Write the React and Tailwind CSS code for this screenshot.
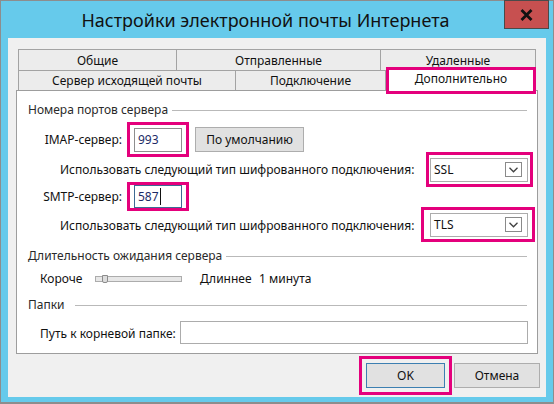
import React from 'react';

const font = { fontFamily: '"Noto Sans", "Liberation Sans", sans-serif' };

function Chevron() {
  return (
    <svg width="9" height="6" viewBox="0 0 9 6" className="block">
      <path d="M0.5 0.8 L4.5 4.8 L8.5 0.8" fill="none" stroke="#404040" strokeWidth="1.3" />
    </svg>
  );
}

function Select({ value }) {
  return (
    <div className="flex h-[24px] w-[98px] items-center border border-[#acacac] bg-white pl-[3px] pr-[5px] text-[12px] text-[#111]">
      <span className="flex-1">{value}</span>
      <span className="flex h-[15px] w-[17px] items-center justify-center border border-[#8a8a8a] bg-white">
        <Chevron />
      </span>
    </div>
  );
}

function GroupHeader({ label, gap = 'ml-[4px]' }) {
  return (
    <div className="flex h-[16px] items-center pl-[11px] pr-[10px]">
      <span className="text-[12px] leading-none text-[#2a2a2a]">{label}</span>
      <span className={`h-px flex-1 bg-[#b9b9b9] ${gap}`} />
    </div>
  );
}

export default function App() {
  return (
    <div
      className="flex h-[404px] w-[554px] flex-col border border-b-2 border-[#8d8d8d] bg-[#66caeb]"
      style={font}
    >
      {/* title bar */}
      <div className="flex h-[37px] items-start">
        <div className="flex h-[37px] flex-1 items-center justify-center pl-[26px] pt-[2px] text-[18px] text-[#111]">
          Настройки электронной почты Интернета
        </div>
        <div className="mr-[4px] mt-[-1px] flex h-[29px] w-[45px] items-center justify-center border border-[#4a4a4a] bg-[#c75050]">
          <svg width="13" height="12" viewBox="0 0 13 12">
            <path d="M1.5 1 L11.5 11 M11.5 1 L1.5 11" stroke="#111" strokeWidth="2.8" />
          </svg>
        </div>
      </div>

      {/* client area */}
      <div className="mx-[7px] flex h-[359px] flex-col bg-[#f0f0f0] text-[12px] text-[#111]">
        {/* tabs */}
        <div className="mt-[11px] ml-[8px] w-[522px]">
          <div className="flex h-[21px] px-[2px]">
            <div className="flex w-[159px] items-center justify-center border border-b-0 border-[#a3a3a3] bg-[#ececec] pt-px">Общие</div>
            <div className="flex w-[204px] items-center justify-center border border-b-0 border-l-0 border-[#a3a3a3] bg-[#ececec] pt-px">Отправленные</div>
            <div className="flex w-[155px] items-center justify-center border border-b-0 border-l-0 border-[#a3a3a3] bg-[#ececec] pt-px">Удаленные</div>
          </div>
          <div className="flex h-[20px] px-[2px]">
            <div className="flex w-[218px] items-center justify-center border border-b-0 border-[#a3a3a3] bg-[#ececec] pt-px">Сервер исходящей почты</div>
            <div className="flex w-[150px] items-center justify-center border border-b-0 border-l-0 border-[#a3a3a3] bg-[#ececec] pt-px">Подключение</div>
            <div className="relative z-10 -mt-[3px] flex h-[27px] w-[150px] items-center justify-center self-start border-[3px] border-[#e4007c] bg-white pb-[3px]">
              Дополнительно
            </div>
          </div>

          {/* panel */}
          <div className="flex h-[264px] flex-col border border-[#9d9d9d] bg-white">
            <div className="mt-[11px]">
              <GroupHeader label="Номера портов сервера" />
            </div>

            <div className="mt-[4px] flex h-[35px] items-center pl-[11px]">
              <span className="w-[94px] text-right">IMAP-сервер:</span>
              <div className="ml-[5px] flex h-[35px] w-[62px] items-center justify-center border-[3px] border-[#e4007c]">
                <div className="flex h-[24px] w-[48px] items-center border border-[#8e8e8e] bg-white pl-[3px] text-[#1c2a66]">993</div>
              </div>
              <div className="ml-[6px] flex h-[25px] w-[109px] items-center justify-center border border-[#adadad] bg-[#e1e1e1]">
                По умолчанию
              </div>
            </div>

            <div className="-mt-[5px] flex h-[35px] items-center pl-[43px] pr-[4px]">
              <span>Использовать следующий тип шифрованного подключения:</span>
              <div className="ml-auto flex h-[35px] w-[107px] items-center border-[3px] border-[#e4007c] pl-[1px]">
                <Select value="SSL" />
              </div>
            </div>

            <div className="-mt-[5px] flex h-[29px] items-center pl-[11px]">
              <span className="w-[94px] text-right">SMTP-сервер:</span>
              <div className="ml-[5px] flex h-[29px] w-[62px] items-center justify-center border-[3px] border-[#e4007c]">
                <div className="flex h-[23px] w-[48px] items-center border border-[#3d6a94] bg-white pl-[3px] text-[#1c2a66]">
                  587
                  <span className="ml-px h-[17px] w-px bg-[#111]" />
                </div>
              </div>
            </div>

            <div className="-mt-[4px] flex h-[35px] items-center pl-[43px] pr-[2px]">
              <span className="mt-[3px]">Использовать следующий тип шифрованного подключения:</span>
              <div className="ml-auto flex h-[35px] w-[114px] items-center border-[3px] border-[#e4007c] pl-[6px]">
                <Select value="TLS" />
              </div>
            </div>

            <div className="mt-[6px]">
              <GroupHeader label="Длительность ожидания сервера" />
            </div>

            <div className="mt-[7px] flex h-[16px] items-center pl-[23px]">
              <span className="w-[55px]">Короче</span>
              <div className="relative h-[6px] w-[87px] border border-[#acacac] bg-[#e7e7e7]">
                <div className="absolute left-[6px] top-[-2px] h-[8px] w-[6px] rounded-b-[2px] border border-[#8c8c8c] bg-[#dcdcdc]" />
              </div>
              <span className="ml-[18px] w-[59px]">Длиннее</span>
              <span>1 минута</span>
            </div>

            <div className="mt-[10px]">
              <GroupHeader label="Папки" gap="ml-[10px]" />
            </div>

            <div className="mt-[8px] flex h-[23px] items-center pl-[23px] pr-[9px]">
              <span className="mt-[3px] w-[140px]">Путь к корневой папке:</span>
              <div className="h-[23px] flex-1 border border-[#acacac] bg-white" />
            </div>
          </div>
        </div>

        {/* buttons */}
        <div className="mt-[2px] flex items-start justify-end pr-[6px]">
          <div className="flex h-[39px] w-[93px] items-center justify-center border-[3px] border-[#e4007c]">
            <div className="flex h-[25px] w-[79px] items-center justify-center border border-[#3c7fb1] bg-[#e1e1e1]">OK</div>
          </div>
          <div className="ml-[2px] mt-[7px] flex h-[25px] w-[86px] items-center justify-center border border-[#adadad] bg-[#e1e1e1]">
            Отмена
          </div>
        </div>
      </div>
    </div>
  );
}
